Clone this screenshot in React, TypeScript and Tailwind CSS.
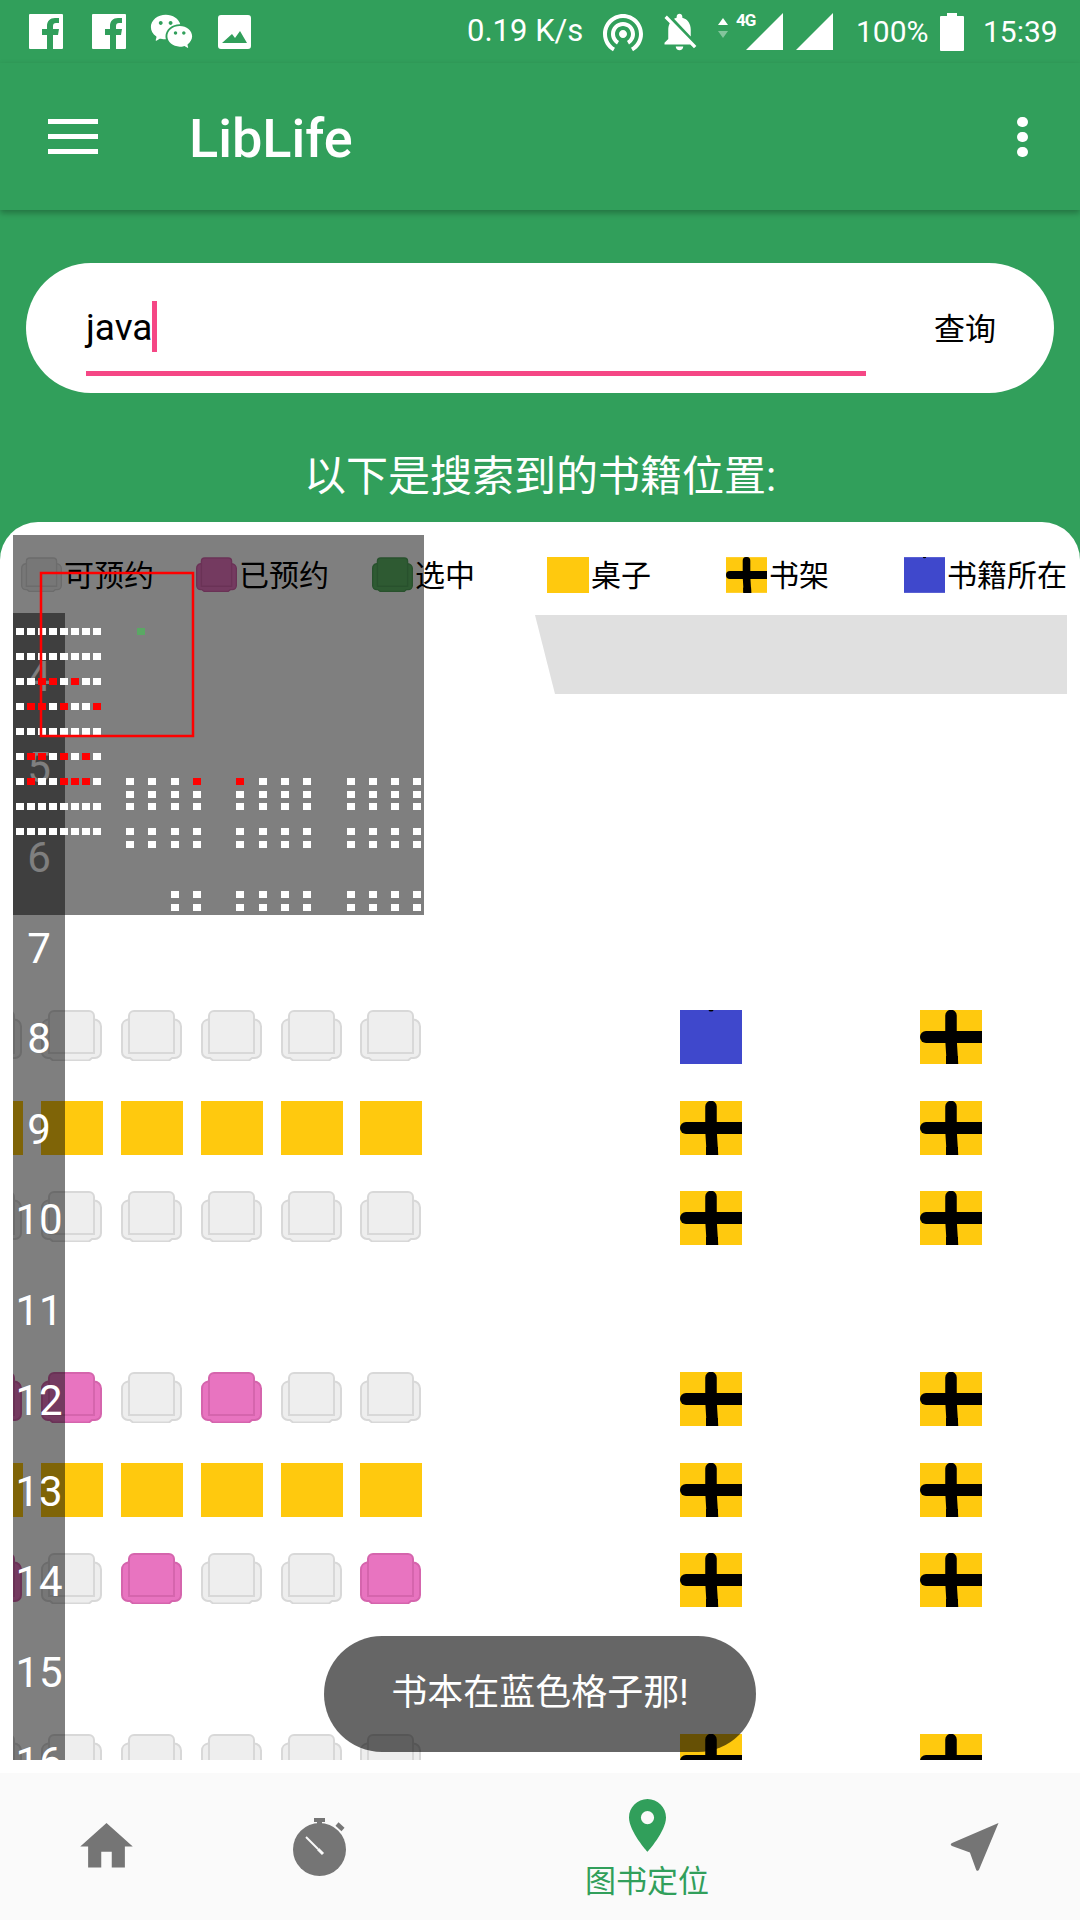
import { MdHome, MdNotificationsOff, MdWifiTethering } from "react-icons/md";
import { RiWechatFill } from "react-icons/ri";

const FbIcon = () => (
  <svg width="34" height="35" viewBox="0 0 34 35" className="shrink-0">
    <path
      fill="#fff"
      d="M1 0h32a1 1 0 0 1 1 1v33a1 1 0 0 1-1 1h-9V21h5l1-6h-6v-3c0-2 1-3 3-3h3V4h-4c-5 0-8 3-8 8v3h-5v6h5v14H1a1 1 0 0 1-1-1V1a1 1 0 0 1 1-1z"
    />
  </svg>
);

const PhotoIcon = () => (
  <svg width="33" height="34" viewBox="0 0 33 34" className="shrink-0 ml-[24px]">
    <path
      fill="#fff"
      fillRule="evenodd"
      d="M3 0h27a3 3 0 0 1 3 3v28a3 3 0 0 1-3 3H3a3 3 0 0 1-3-3V3a3 3 0 0 1 3-3zM4 28h25l-7-12-5 7-3-4z"
    />
  </svg>
);

const Signal = ({ className = "" }: { className?: string }) => (
  <svg width="37" height="37" viewBox="0 0 37 37" className={className}>
    <polygon points="37,0 37,37 0,37" fill="#fff" />
  </svg>
);

const Seat = ({ fill = "#eeeeee", stroke = "#d8d8d8" }: { fill?: string; stroke?: string }) => (
  <svg width="61" height="51" viewBox="0 0 61 51" className="block shrink-0">
    <path
      d="M7 9.5h46a7 7 0 0 1 7 7V42a6 6 0 0 1-6 6h-3l-3 2.5H12L9 48H7a6 6 0 0 1-6-6V16.5a7 7 0 0 1 6-7z"
      fill={fill}
      stroke={stroke}
      strokeWidth="2"
    />
    <path d="M13 1h35a5 5 0 0 1 5 5v37H8V6a5 5 0 0 1 5-5z" fill={fill} stroke={stroke} strokeWidth="2" />
  </svg>
);

const Table = () => <div className="w-[62px] h-[54px] shrink-0 bg-[#ffc90e]" />;

const Shelf = ({ small = false }: { small?: boolean }) => (
  <svg width={small ? 41 : 62} height={small ? 36 : 54} viewBox="0 0 62 54" className="block shrink-0">
    <rect width="62" height="54" fill="#ffc90e" />
    <path d="M31 5.5V30l1.5 24" stroke="#000" strokeWidth="11.5" strokeLinecap="round" fill="none" />
    <path d="M6 27h56" stroke="#000" strokeWidth="12" strokeLinecap="round" fill="none" />
    <rect x="56" y="21" width="6" height="12" />
    <rect x="26" y="46" width="12" height="8" />
  </svg>
);

const BlueCell = ({ small = false }: { small?: boolean }) => (
  <svg width={small ? 41 : 62} height={small ? 36 : 54} viewBox="0 0 62 54" className="block shrink-0">
    <rect width="62" height="54" fill="#3f48cc" />
    <ellipse cx="31" cy="0" rx="2.5" ry="1.5" fill="#000" />
  </svg>
);

function LegendSeat(props: { fill?: string; stroke?: string }) {
  return (
    <div className="w-[41px] h-[35px] [&>svg]:w-[41px] [&>svg]:h-[35px]">
      <Seat {...props} />
    </div>
  );
}

const legend = [
  { label: "可预约", width: "w-[175px]", icon: <LegendSeat /> },
  { label: "已预约", width: "w-[176px]", icon: <LegendSeat fill="#e874c0" stroke="#d565ad" /> },
  { label: "选中", width: "w-[175px]", icon: <LegendSeat fill="#5cb465" stroke="#50a35a" /> },
  { label: "桌子", width: "w-[179px]", icon: <div className="w-[42px] h-[36px] bg-[#ffc90e]" /> },
  { label: "书架", width: "w-[178px]", icon: <Shelf small /> },
  { label: "书籍所在", width: "w-[165px]", icon: <BlueCell small /> },
];

// p = reserved seat, s = free seat, by column (col 0 is cut off by the left edge)
const rows: { seats?: string; shelf?: boolean; table?: boolean; blue?: boolean }[] = [
  { seats: "ssssss", shelf: true, blue: true },
  { table: true, shelf: true },
  { seats: "ssssss", shelf: true },
  {},
  { seats: "ppspss", shelf: true },
  { table: true, shelf: true },
  { seats: "pspssp", shelf: true },
  {},
  { seats: "ssssss", shelf: true },
];

const SeatRow = ({ row }: { row: (typeof rows)[number] }) => (
  <div className="h-[90.5px] flex items-start -ml-[51.7px]">
    <div className="w-[461px] shrink-0 flex gap-[18px]">
      {row.seats &&
        row.seats.split("").map((s, i) => (
          <div key={i} className="w-[61.8px] shrink-0">
            {s === "p" ? <Seat fill="#e874c0" stroke="#d565ad" /> : <Seat />}
          </div>
        ))}
      {row.table &&
        [0, 1, 2, 3, 4, 5].map((i) => (
          <div key={i} className="w-[61.8px] shrink-0">
            <Table />
          </div>
        ))}
    </div>
    {row.shelf && (
      <div className="ml-[257.7px] flex gap-[178px]">
        {row.blue ? <BlueCell /> : <Shelf />}
        <Shelf />
      </div>
    )}
  </div>
);

const leftRows = [631, 656, 681, 706, 731, 756, 781, 806, 831];
const leftCols = [20, 31, 42, 53, 64, 75, 86, 97];
const redLeft: Record<number, number[]> = {
  681: [2, 3, 5],
  706: [1, 2, 4, 7],
  756: [1, 2, 4, 6],
  781: [1, 4, 5, 6],
};
const blockCols = [130, 152, 175, 197, 240, 263, 285, 307, 351, 373, 395, 417];
const blockRows = [781, 794, 806, 831, 844];
const bottomRows = [894, 907];

const Minimap = () => (
  <div className="absolute left-[13px] top-[13px] w-[411px] h-[380px] bg-black/50">
    <svg width="411" height="380" viewBox="13 535 411 380" className="block">
      {leftRows.map((y) =>
        leftCols.map((x, i) => (
          <rect
            key={`${y}-${x}`}
            x={x - 4}
            y={y - 3}
            width="8"
            height="7"
            fill={redLeft[y]?.includes(i) ? "#f00" : "#fff"}
          />
        )),
      )}
      <rect x="137" y="628" width="8" height="7" fill="#5aa864" />
      {blockRows.map((y) =>
        blockCols.map((x, i) => (
          <rect
            key={`${y}-${x}`}
            x={x - 4}
            y={y - 3}
            width="8"
            height="7"
            fill={y === 781 && (i === 3 || i === 4) ? "#f00" : "#fff"}
          />
        )),
      )}
      {bottomRows.map((y) =>
        blockCols.slice(2).map((x) => <rect key={`${y}-${x}`} x={x - 4} y={y - 3} width="8" height="7" fill="#fff" />),
      )}
      <rect x="41" y="573" width="152" height="163" fill="none" stroke="#f00" strokeWidth="2.5" />
    </svg>
  </div>
);

const rulerNumbers = [4, 5, 6, 7, 8, 9, 10, 11, 12, 13, 14, 15, 16];

export default function App() {
  return (
    <div className="relative w-[1080px] h-[1920px] overflow-hidden flex flex-col bg-[#319f5b] font-[Roboto,'Noto_Sans_CJK_SC',sans-serif]">
      {/* Status bar */}
      <div className="h-[63px] shrink-0 flex items-center justify-between pl-[29px] pr-[23px] text-white text-[30px]">
        <div className="flex items-center">
          <FbIcon />
          <div className="ml-[29px]">
            <FbIcon />
          </div>
          <RiWechatFill className="ml-[23px] shrink-0" size={45} color="#fff" />
          <PhotoIcon />
        </div>
        <div className="flex items-center">
          <span className="w-[114px] text-[31px] whitespace-nowrap">0.19 K/s</span>
          <MdWifiTethering className="ml-[18px] shrink-0" size={48} color="#fff" />
          <MdNotificationsOff className="ml-[10px] shrink-0" size={45} color="#fff" />
          <div className="relative ml-[15px] w-[66px] h-[37px] shrink-0">
            <svg width="12" height="20" viewBox="0 0 12 20" className="absolute left-0 top-[5px]">
              <polygon points="6,0 11,7 1,7" fill="#fff" />
              <polygon points="6,20 11,13 1,13" fill="#fff" opacity="0.4" />
            </svg>
            <Signal className="absolute right-0 top-0" />
            <span className="absolute left-[19px] -top-[3px] text-[17px] font-bold leading-[20px] tracking-[-1px]">4G</span>
          </div>
          <Signal className="ml-[13px] shrink-0" />
          <span className="ml-[23px] w-[72px]">100%</span>
          <svg width="24" height="38" viewBox="0 0 24 38" className="ml-[12px] shrink-0">
            <path fill="#fff" d="M7 0h10v3h6a1 1 0 0 1 1 1v33a1 1 0 0 1-1 1H1a1 1 0 0 1-1-1V4a1 1 0 0 1 1-1h6z" />
          </svg>
          <span className="ml-[19px] w-[74px]">15:39</span>
        </div>
      </div>

      {/* App bar */}
      <div className="h-[147px] shrink-0 flex items-center pl-[48px] pr-[52px] text-white shadow-[0_3px_6px_rgba(0,0,0,0.28)]">
        <div className="w-[50px] flex flex-col gap-[10px]">
          <div className="h-[5px] bg-white" />
          <div className="h-[5px] bg-white" />
          <div className="h-[5px] bg-white" />
        </div>
        <span className="ml-[91px] mt-[4px] text-[54px] font-medium leading-none">LibLife</span>
        <div className="ml-auto flex flex-col gap-[5px]">
          <div className="w-[11px] h-[10px] rounded-full bg-white" />
          <div className="w-[11px] h-[10px] rounded-full bg-white" />
          <div className="w-[11px] h-[10px] rounded-full bg-white" />
        </div>
      </div>

      {/* Search */}
      <div className="mt-[53px] mx-[26px] h-[130px] shrink-0 rounded-full bg-white flex pl-[60px] text-black">
        <div className="w-[780px] h-[113px] border-b-[5px] border-[#f54785] flex items-center pt-[19px]">
          <span className="text-[37px] leading-none translate-y-[1px]">java</span>
          <div className="w-[5px] h-[51px] bg-[#f54785]" />
        </div>
        <div className="ml-[68px] pt-[47px] text-[31px] leading-[40px]">查询</div>
      </div>

      <div className="h-[129px] shrink-0 pt-[60px] text-center text-white text-[42px] leading-[48px]">
        以下是搜索到的书籍位置:
      </div>

      {/* Seat map panel */}
      <div className="relative flex-1 bg-white rounded-t-[38px] overflow-hidden">
        <div className="flex pl-[21px] pt-[35px] h-[71px] text-[30px] text-black leading-[36px]">
          {legend.map((item) => (
            <div key={item.label} className={`${item.width} flex items-start gap-[2px] whitespace-nowrap`}>
              {item.icon}
              <span className="mt-[1px]">{item.label}</span>
            </div>
          ))}
        </div>
        <svg width="532" height="79" viewBox="0 0 532 79" className="block mt-[22px] ml-[535px]">
          <polygon points="0,0 532,0 532,79 20,79" fill="#e0e0e0" />
        </svg>
        <div className="ml-[13px] mt-[316px] h-[750px] overflow-hidden">
          {rows.map((row, i) => (
            <SeatRow key={i} row={row} />
          ))}
        </div>

        {/* Row ruler */}
        <div className="absolute left-[13px] top-[91px] w-[52px] h-[1147px] pt-[19px] bg-black/50 overflow-hidden text-white text-[42px]">
          {rulerNumbers.map((n) => (
            <div key={n} className="h-[90.5px] flex items-center justify-center leading-none">
              {n}
            </div>
          ))}
        </div>

        <Minimap />
      </div>

      {/* Bottom navigation */}
      <div className="h-[147px] shrink-0 flex bg-[#fafafa] shadow-[0_-1px_3px_rgba(0,0,0,0.07)]">
        <div className="w-[213px] flex items-center justify-center">
          <MdHome size={63} color="#757575" />
        </div>
        <div className="w-[213px] flex items-center justify-center">
          <svg width="53" height="58" viewBox="0 0 53 58">
            <circle cx="26.5" cy="31.5" r="26.5" fill="#757575" />
            <rect x="21" y="0" width="11" height="4" fill="#757575" />
            <rect x="24" y="3" width="5" height="4" fill="#757575" />
            <path d="M44 6l6 5.5" stroke="#757575" strokeWidth="4.5" />
            <path d="M13 19l12 12" stroke="#fafafa" strokeWidth="2" />
            <path d="M25 31l5 5" stroke="#fafafa" strokeWidth="3" />
          </svg>
        </div>
        <div className="flex-1 flex flex-col items-center pt-[26px] text-[#319f5b]">
          <svg width="37" height="53" viewBox="5 2 14 20">
            <path
              fill="#319f5b"
              d="M12 2C8.13 2 5 5.13 5 9c0 5.25 7 13 7 13s7-7.75 7-13c0-3.87-3.13-7-7-7zm0 9.5a2.5 2.5 0 010-5 2.5 2.5 0 010 5z"
            />
          </svg>
          <span className="mt-[12px] text-[31px] leading-[36px]">图书定位</span>
        </div>
        <div className="w-[212px] flex items-center justify-center">
          <svg width="49" height="48" viewBox="0 0 47 47">
            <path
              fill="#757575"
              d="M47 0L28 45.5c-.8 1.7-2.5 1.9-3 0L19 29 1.5 22.5c-1.7-.8-1.7-2 0-2.8z"
            />
          </svg>
        </div>
      </div>

      {/* Toast */}
      <div className="absolute left-1/2 -translate-x-1/2 top-[1636px] w-[432px] h-[116px] pb-[3px] rounded-full bg-black/60 flex items-center justify-center text-white text-[36px] whitespace-nowrap">
        书本在蓝色格子那!
      </div>
    </div>
  );
}
